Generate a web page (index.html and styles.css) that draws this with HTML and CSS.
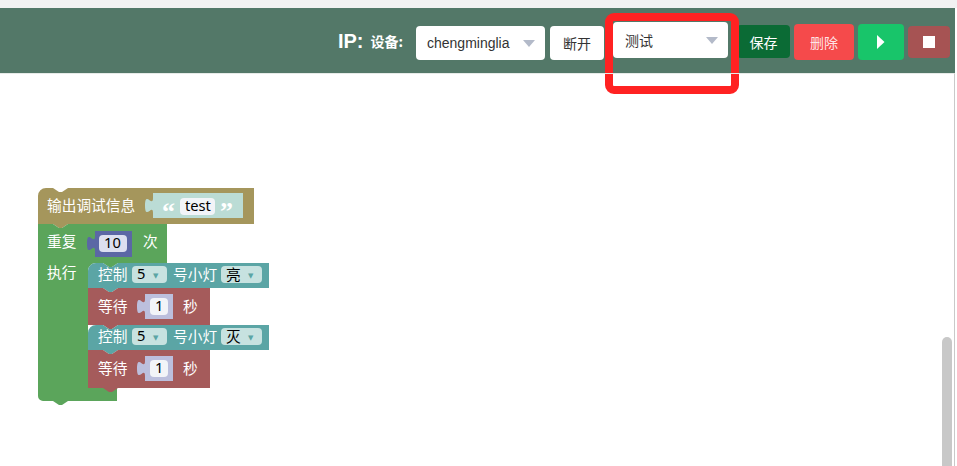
FILE: index.html
```html
<!DOCTYPE html>
<html lang="zh-CN">
<head>
<meta charset="utf-8">
<title>Blockly</title>
<link rel="stylesheet" href="styles.css">
</head>
<body>
<div class="topstrip"></div>
<header class="toolbar">
  <span class="ip">IP:</span>
  <span class="dev-label">设备:</span>
  <div class="select sel-device"><span class="sel-text">chengminglia</span><span class="caret"></span></div>
  <button class="btn btn-light">断开</button>
  <div class="select sel-mode marked"><span class="sel-text">测试</span><span class="caret"></span></div>
  <button class="btn btn-save">保存</button>
  <button class="btn btn-del">删除</button>
  <button class="btn btn-run"><svg width="8" height="14" viewBox="0 0 8 14"><path d="M0 0 L7.5 7 L0 14 Z" fill="#fff"/></svg></button>
  <button class="btn btn-stop"><span class="square"></span></button>
</header>
<main class="workspace">
  <svg class="blocks" width="955" height="393" viewBox="0 73 955 393">
    <!-- print block -->
    <path class="b-olive" d="M38,195 a8,8 0 0 1 8,-8 H53 l6,4 3,0 6,-4 H254 V223 H68 l-6,4 -3,0 -6,-4 H38 Z"/>
    <text class="lbl" x="47" y="210">输出调试信息</text>
    <path class="b-text" d="M153,192 H243 V217 H153 V212 c0,-10 -8,8 -8,-7.5 s8,2.5 8,-7.5 Z"/>
    <text class="quote" x="162" y="219">“</text>
    <rect class="f-white" x="180" y="197" width="35" height="17" rx="4"/>
    <text class="fld" x="185" y="210">test</text>
    <text class="quote" x="220" y="219">”</text>

    <!-- repeat block -->
    <path class="b-green" d="M38,223 H53 l6,4 3,0 6,-4 H167 V262 H118 l-6,4 -3,0 -6,-4 H96 a8,8 0 0 0 -8,8 V379 a8,8 0 0 0 8,8 H117 V400 H68 l-6,4 -3,0 -6,-4 H43 a5,5 0 0 1 -5,-5 Z"/>
    <text class="lbl" x="47" y="246">重复</text>
    <path class="b-purple" d="M95,230 H132 V256 H95 V250 c0,-10 -8,8 -8,-7.5 s8,2.5 8,-7.5 Z"/>
    <rect class="f-lav" x="99" y="234" width="28" height="17" rx="4"/>
    <text class="fld" x="104" y="247">10</text>
    <text class="lbl" x="143" y="246">次</text>
    <text class="lbl" x="47" y="277">执行</text>

    <!-- control 1 -->
    <path class="b-teal" d="M88,270 a8,8 0 0 1 8,-8 H103 l6,4 3,0 6,-4 H269 V287 H118 l-6,4 -3,0 -6,-4 H88 Z"/>
    <text class="lbl" x="98" y="279">控制</text>
    <rect class="f-teal" x="132" y="265" width="35" height="17" rx="4"/>
    <text class="fld" x="137" y="278">5</text>
    <text class="arrow" x="153" y="277">▼</text>
    <text class="lbl" x="173" y="279">号小灯</text>
    <rect class="f-teal" x="221" y="265" width="41" height="17" rx="4"/>
    <text class="fld" x="226" y="279">亮</text>
    <text class="arrow" x="248" y="277">▼</text>

    <!-- wait 1 -->
    <path class="b-red" d="M88,287 H103 l6,4 3,0 6,-4 H210 V324 H118 l-6,4 -3,0 -6,-4 H88 Z"/>
    <text class="lbl" x="98" y="311">等待</text>
    <path class="b-lav" d="M145,293 H173 V318 H145 V313 c0,-10 -8,8 -8,-7.5 s8,2.5 8,-7.5 Z"/>
    <rect class="f-white" x="150" y="297" width="18" height="17" rx="4"/>
    <text class="fld" x="155" y="310">1</text>
    <text class="lbl" x="183" y="311">秒</text>

    <!-- control 2 -->
    <path class="b-teal" d="M88,332 a8,8 0 0 1 8,-8 H103 l6,4 3,0 6,-4 H269 V349 H118 l-6,4 -3,0 -6,-4 H88 Z"/>
    <text class="lbl" x="98" y="341">控制</text>
    <rect class="f-teal" x="132" y="327" width="35" height="17" rx="4"/>
    <text class="fld" x="137" y="340">5</text>
    <text class="arrow" x="153" y="339">▼</text>
    <text class="lbl" x="173" y="341">号小灯</text>
    <rect class="f-teal" x="221" y="327" width="41" height="17" rx="4"/>
    <text class="fld" x="226" y="341">灭</text>
    <text class="arrow" x="248" y="339">▼</text>

    <!-- wait 2 -->
    <path class="b-red" d="M88,349 H103 l6,4 3,0 6,-4 H210 V387 H118 l-6,4 -3,0 -6,-4 H88 Z"/>
    <text class="lbl" x="98" y="373">等待</text>
    <path class="b-lav" d="M145,355 H173 V380 H145 V375 c0,-10 -8,8 -8,-7.5 s8,2.5 8,-7.5 Z"/>
    <rect class="f-white" x="150" y="359" width="18" height="17" rx="4"/>
    <text class="fld" x="155" y="372">1</text>
    <text class="lbl" x="183" y="373">秒</text>
  </svg>
  <div class="scroll-thumb"></div>
</main>
</body>
</html>
```
FILE: styles.css
```css
html, body {
  margin: 0;
  padding: 0;
  background: #ffffff;
  overflow: hidden;
}
body {
  width: 957px;
  height: 466px;
  font-family: "Liberation Sans", "Noto Sans CJK SC", sans-serif;
}
.topstrip {
  height: 8px;
  background: #f2f2f2;
}
.toolbar {
  width: 955px;
  height: 65px;
  box-sizing: border-box;
  background: #537868;
  display: flex;
  align-items: center;
  justify-content: flex-end;
  padding-right: 5px;
}
.ip {
  color: #fff;
  font-weight: bold;
  font-size: 20px;
  margin-right: 7px;
  margin-top: 2px;
}
.dev-label {
  color: #fff;
  font-size: 14px;
  font-weight: bold;
  font-family: "Noto Sans CJK SC", sans-serif;
  margin-right: 13px;
}
.select {
  position: relative;
  background: #fff;
  border-radius: 4px;
  box-sizing: border-box;
  display: flex;
  align-items: center;
  height: 34px;
  color: #333;
  font-size: 14px;
}
.sel-device {
  width: 129px;
  padding-left: 11px;
  margin-top: 4px;
}
.sel-mode {
  width: 115px;
  height: 36px;
  padding-left: 12px;
  margin-left: 9px;
  margin-bottom: 1px;
  font-family: "Noto Sans CJK SC", sans-serif;
}
.caret {
  position: absolute;
  right: 10px;
  top: 50%;
  margin-top: -3px;
  width: 0;
  height: 0;
  border-left: 6.5px solid transparent;
  border-right: 6.5px solid transparent;
  border-top: 7px solid #b3bac9;
}
.marked::after {
  content: "";
  position: absolute;
  left: -8px;
  top: -9px;
  width: 134px;
  height: 81px;
  box-sizing: border-box;
  border: 8px solid #ff2222;
  border-radius: 9px;
}
.btn {
  border: none;
  border-radius: 4px;
  height: 34px;
  padding: 0;
  font-size: 14px;
  font-family: "Noto Sans CJK SC", sans-serif;
  color: #fff;
  display: flex;
  align-items: center;
  justify-content: center;
}
.btn-light {
  background: #fff;
  color: #333;
  width: 54px;
  margin-left: 5px;
  margin-top: 4px;
}
.btn-save {
  background: #0b6b35;
  width: 53px;
  height: 33px;
  margin-left: 9px;
  margin-top: 2px;
}
.btn-del {
  background: #f54a4b;
  color: #ffe4e6;
  width: 60px;
  height: 36px;
  margin-left: 4px;
  margin-top: 2px;
}
.btn-run {
  background: #18c56a;
  width: 46px;
  height: 36px;
  margin-left: 4px;
  margin-top: 2px;
}
.btn-stop {
  background: #a65353;
  width: 42px;
  height: 32px;
  margin-left: 4px;
  margin-top: 2px;
}
.square {
  width: 12px;
  height: 12px;
  background: #fff;
}
.workspace {
  position: relative;
  width: 955px;
  height: 393px;
  box-sizing: border-box;
  border-right: 1px solid #c9c9c9;
  border-top: 1px solid #e6ebe8;
  overflow: hidden;
}
.blocks {
  position: absolute;
  left: 0;
  top: 0;
}
.scroll-thumb {
  position: absolute;
  left: 942px;
  top: 263px;
  width: 10px;
  height: 160px;
  border-radius: 5px;
  background: #c8c8c8;
}
.b-olive { fill: #a5965c; }
.b-green { fill: #5ba55b; }
.b-teal { fill: #5ba5a5; }
.b-red { fill: #a55b5b; }
.b-purple { fill: #5b67a5; }
.b-text { fill: #bbdcd5; }
.b-lav { fill: #bcbfdd; }
.f-white { fill: #f2f4f8; }
.f-lav { fill: #dcdff0; }
.f-teal { fill: #c7e2e0; }
.lbl {
  fill: #fff;
  font-family: "Noto Sans CJK SC", sans-serif;
  font-size: 14.7px;
}
.fld {
  fill: #000;
  font-family: "Noto Sans", "Noto Sans CJK SC", sans-serif;
  font-size: 14.7px;
}
.arrow {
  fill: #5ba5a5;
  font-family: "DejaVu Sans", sans-serif;
  font-size: 7px;
}
.quote {
  fill: #fff;
  font-family: "Liberation Serif", serif;
  font-weight: bold;
  font-size: 26px;
}
```
